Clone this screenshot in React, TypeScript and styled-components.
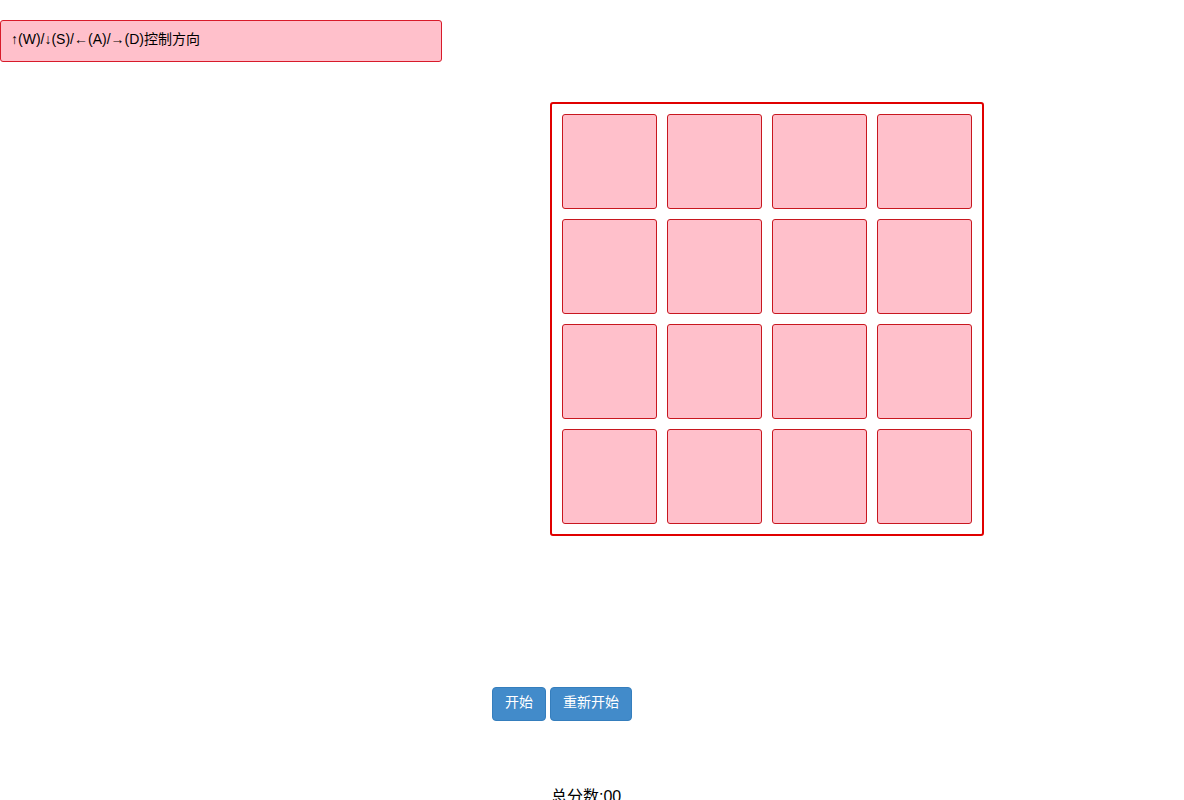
import React from 'react';
import styled, { createGlobalStyle } from 'styled-components';

const GlobalStyle = createGlobalStyle`
  html, body {
    margin: 0;
    padding: 0;
    background: #fff;
    font-family: "Liberation Sans", Arial, "Noto Sans CJK SC", sans-serif;
    font-size: 14px;
    color: #000;
  }
`;

const Page = styled.div`
  display: flex;
  flex-direction: column;
  padding-top: 20px;
`;

const Tip = styled.div`
  width: 420px;
  padding: 8px 10px 12px;
  line-height: 20px;
  background-color: pink;
  border: 1px solid #d81b2a;
  border-radius: 3px;
`;

const Board = styled.div`
  margin: 40px 0 0 550px;
  box-sizing: border-box;
  width: 434px;
  height: 434px;
  padding: 10px;
  border: 2px solid #e00000;
  border-radius: 3px;
  display: grid;
  grid-template-columns: repeat(4, 95px);
  grid-auto-rows: 95px;
  gap: 10px;
  align-content: start;
`;

const Cell = styled.div`
  background-color: pink;
  border: 1px solid #c8171f;
  border-radius: 3px;
`;

const Controls = styled.div`
  margin: 151px 0 0 492px;
  display: flex;
  gap: 4px;
`;

const Button = styled.button`
  font-family: "Liberation Sans", Arial, "Noto Sans CJK SC", sans-serif;
  font-size: 14px;
  line-height: 20px;
  padding: 4px 12px 8px;
  height: 34px;
  color: #fff;
  background-color: #428bca;
  border: 1px solid #357ebd;
  border-radius: 4px;
  cursor: pointer;
`;

const Score = styled.div`
  margin: 66px 0 0 551px;
  font-size: 16px;
  line-height: 20px;
`;

export default function App() {
  const cells = Array.from({ length: 16 }, (_, i) => i);
  return (
    <>
      <GlobalStyle />
      <Page>
        <Tip>↑(W)/↓(S)/←(A)/→(D)控制方向</Tip>
        <Board>
          {cells.map((i) => (
            <Cell key={i} />
          ))}
        </Board>
        <Controls>
          <Button>开始</Button>
          <Button>重新开始</Button>
        </Controls>
        <Score>总分数:00</Score>
      </Page>
    </>
  );
}
